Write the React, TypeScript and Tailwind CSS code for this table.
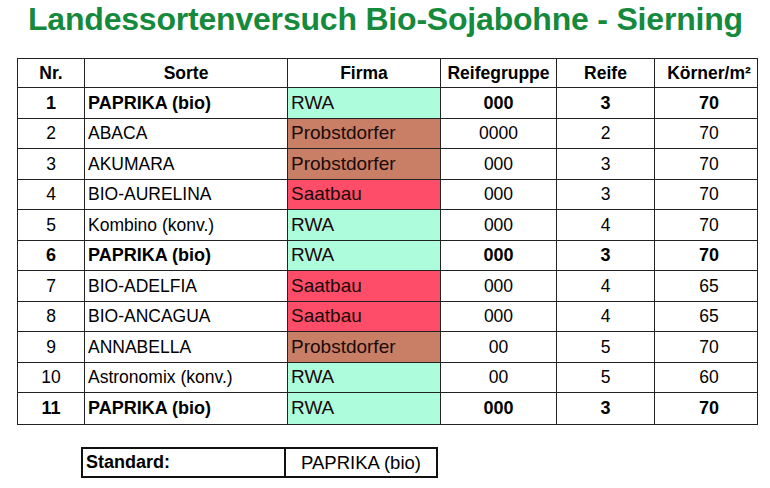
import React from "react";

type Row = { nr: string; sorte: string; firma: "RWA" | "Probstdorfer" | "Saatbau"; rg: string; reife: string; k: string; bold?: boolean };

const rows: Row[] = [
  { nr: "1", sorte: "PAPRIKA (bio)", firma: "RWA", rg: "000", reife: "3", k: "70", bold: true },
  { nr: "2", sorte: "ABACA", firma: "Probstdorfer", rg: "0000", reife: "2", k: "70" },
  { nr: "3", sorte: "AKUMARA", firma: "Probstdorfer", rg: "000", reife: "3", k: "70" },
  { nr: "4", sorte: "BIO-AURELINA", firma: "Saatbau", rg: "000", reife: "3", k: "70" },
  { nr: "5", sorte: "Kombino (konv.)", firma: "RWA", rg: "000", reife: "4", k: "70" },
  { nr: "6", sorte: "PAPRIKA (bio)", firma: "RWA", rg: "000", reife: "3", k: "70", bold: true },
  { nr: "7", sorte: "BIO-ADELFIA", firma: "Saatbau", rg: "000", reife: "4", k: "65" },
  { nr: "8", sorte: "BIO-ANCAGUA", firma: "Saatbau", rg: "000", reife: "4", k: "65" },
  { nr: "9", sorte: "ANNABELLA", firma: "Probstdorfer", rg: "00", reife: "5", k: "70" },
  { nr: "10", sorte: "Astronomix (konv.)", firma: "RWA", rg: "00", reife: "5", k: "60" },
  { nr: "11", sorte: "PAPRIKA (bio)", firma: "RWA", rg: "000", reife: "3", k: "70", bold: true },
];

const firmaBg: Record<Row["firma"], string> = {
  RWA: "bg-[#adfddc]",
  Probstdorfer: "bg-[#c97e66]",
  Saatbau: "bg-[#fe4d68]",
};

const cols = "grid grid-cols-[66px_1px_202px_1px_152px_1px_115px_1px_97px_1px_108px]";

function Sep() {
  return <div className="bg-[#222]" />;
}

export default function App() {
  return (
    <div className="w-[770px] h-[488px] bg-white overflow-hidden" style={{ fontFamily: '"Liberation Sans", Arial, sans-serif' }}>
      <div className="h-[40px] pl-[28px] pt-[1px] text-[32px] leading-[36px] font-bold text-[#158a3c] tracking-[-0.2px] whitespace-nowrap">
        Landessortenversuch Bio-Sojabohne - Sierning
      </div>
      <div className="ml-[17px] mt-[18px] w-[741px] border border-[#222] text-black">
        <div className={`${cols} h-[29px] border-b border-[#222] font-bold text-[17.5px]`}>
          <div className="flex items-center justify-center">Nr.</div>
          <Sep />
          <div className="flex items-center justify-center">Sorte</div>
          <Sep />
          <div className="flex items-center justify-center">Firma</div>
          <Sep />
          <div className="flex items-center justify-center">Reifegruppe</div>
          <Sep />
          <div className="flex items-center justify-center">Reife</div>
          <Sep />
          <div className="flex items-center justify-center">Körner/m²</div>
        </div>
        {rows.map((r, i) => (
          <div
            key={r.nr}
            className={`${cols} ${i % 2 === 0 ? "h-[31px]" : "h-[30px]"} ${i < rows.length - 1 ? "border-b border-[#222]" : ""} ${r.bold ? "font-bold text-[18px]" : "text-[17.5px]"}`}
          >
            <div className="flex items-center justify-center">{r.nr}</div>
            <Sep />
            <div className="flex items-center pl-[3px]">{r.sorte}</div>
            <Sep />
            <div className={`flex items-center pl-[3px] font-normal text-[19px] text-[#1a0a08] ${firmaBg[r.firma]}`}>{r.firma}</div>
            <Sep />
            <div className="flex items-center justify-center">{r.rg}</div>
            <Sep />
            <div className="flex items-center justify-center">{r.reife}</div>
            <Sep />
            <div className="flex items-center justify-center">{r.k}</div>
          </div>
        ))}
      </div>
      <div className="ml-[81px] mt-[22px] w-[357px] h-[31px] border-2 border-[#111] grid grid-cols-[201px_2px_1fr] text-black">
        <div className="flex items-center pl-[3px] font-bold text-[18px]">Standard:</div>
        <div className="bg-[#111]" />
        <div className="flex items-center justify-center text-[18.5px]">PAPRIKA (bio)</div>
      </div>
    </div>
  );
}
